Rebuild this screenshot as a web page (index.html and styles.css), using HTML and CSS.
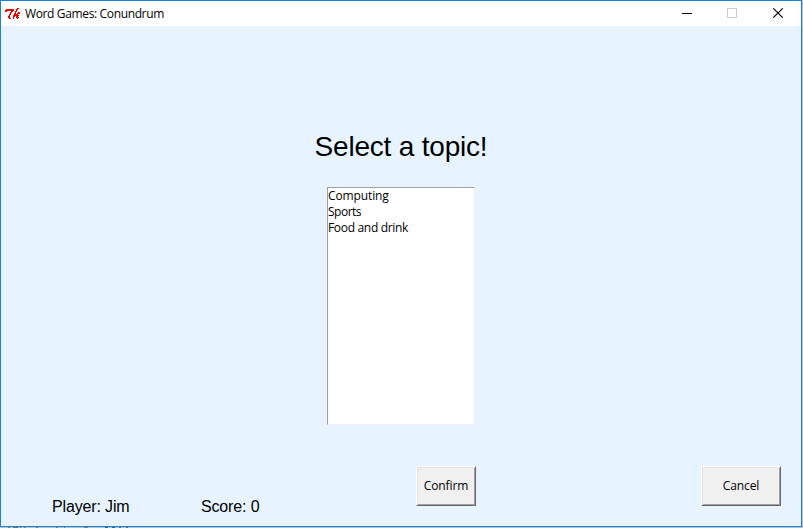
FILE: index.html
```html
<!DOCTYPE html>
<html lang="en">
<head>
<meta charset="utf-8">
<title>Word Games: Conundrum</title>
<link rel="stylesheet" href="styles.css">
</head>
<body>
<div class="window">
  <header class="titlebar">
    <svg class="logo" width="16" height="14" viewBox="0 0 16 14" fill="none" stroke="#f00000" shape-rendering="crispEdges"><path d="M1 2.5H9M0 3.5H9M0 4.5H2M6 4.5H8M5 5.5H7M5 6.5H6M4 7.5H6M4 8.5H5M3 9.5H5M3 10.5H5M4 11.5H6M12 1.5H14M11 2.5H13M11 3.5H12M10 4.5H12M10 5.5H11M13 5.5H15M9 6.5H11M12 6.5H15M9 7.5H13M8 8.5H14M8 9.5H10M11 9.5H13M8 10.5H9M11 10.5H14M8 11.5H9M12 11.5H13"/></svg>
    <span class="caption">Word Games: Conundrum</span>
    <div class="controls">
      <svg width="45" height="25" viewBox="0 0 45 25" shape-rendering="crispEdges"><path d="M17 12.5H27" stroke="#000"/></svg>
      <svg width="46" height="25" viewBox="0 0 46 25" shape-rendering="crispEdges"><rect x="17.5" y="7.5" width="9" height="9" fill="none" stroke="#ccc"/></svg>
      <svg width="45" height="25" viewBox="0 0 45 25"><path d="M17.3 7.3L26.7 16.7M26.7 7.3L17.3 16.7" stroke="#000" stroke-width="1.2"/></svg>
    </div>
  </header>
  <main class="content">
    <h1>Select a topic!</h1>
    <ul class="listbox">
      <li class="computing">Computing</li>
      <li class="sports">Sports</li>
      <li class="food">Food and drink</li>
    </ul>
    <footer class="footer">
      <span class="player">Player: Jim</span>
      <span class="score">Score: 0</span>
      <button class="confirm">Confirm</button>
      <button class="cancel">Cancel</button>
    </footer>
  </main>
</div>
<div class="backdrop"></div>
</body>
</html>
```
FILE: styles.css
```css
* { box-sizing: border-box; }
body {
  margin: 0;
  width: 803px;
  height: 528px;
  overflow: hidden;
  background: #b9c0c6;
  color: #000;
  font: 12px "Open Sans", sans-serif;
}
.window {
  width: 802px;
  height: 527px;
  border: 1px solid #1883d7;
  background: #e7f4ff;
  display: flex;
  flex-direction: column;
}
/* Sliver of the page behind the window */
.backdrop {
  height: 1px;
  background: linear-gradient(90deg,
    transparent 8px, #8c8060 8px 10px, transparent 10px 13px,
    #6f7660 13px 18px, transparent 18px 20px, #8c8060 20px 21px, transparent 21px 24px,
    #a08a60 24px 26px, transparent 26px 36px, #8c8060 36px 38px, transparent 38px 56px,
    #8c8060 56px 58px, transparent 58px 64px, #8c8060 64px 65px, transparent 65px 84px,
    #8c8060 84px 88px, transparent 88px 105px, #2d6680 105px 108px, transparent 108px 112px,
    #2d6680 112px 115px, transparent 115px 119px, #80666a 119px 121px, transparent 121px 126px,
    #80666a 126px 128px, transparent 128px);
}
.titlebar {
  height: 25px;
  flex: none;
  display: flex;
  align-items: center;
  background: #fff;
  padding-left: 4px;
}
.logo { margin-right: 4px; }
.caption { letter-spacing: -0.36px; white-space: nowrap; }
.controls { display: flex; margin-left: auto; }
.content {
  flex: 1;
  display: flex;
  flex-direction: column;
  align-items: center;
}
h1 {
  margin: 104px 0 24px;
  font: 28px/33px "Liberation Sans", sans-serif;
  letter-spacing: -0.2px;
}
.listbox {
  width: 148px;
  height: 238px;
  margin: 0;
  padding: 0;
  list-style: none;
  background: #fff;
  border: 1px solid;
  border-color: #a0a0a0 #f0f0f0 #f0f0f0 #a0a0a0;
  line-height: 16px;
}
.computing { letter-spacing: -0.12px; }
.sports { letter-spacing: -0.5px; }
.food { letter-spacing: -0.32px; }
.footer {
  width: 100%;
  display: flex;
  margin-top: 41px;
  padding-left: 51px;
}
.player, .score {
  font: 16px/18px "Liberation Sans", sans-serif;
  padding-top: 32px;
  white-space: nowrap;
  letter-spacing: -0.15px;
}
.player { width: 149px; }
.score { width: 215px; }
button {
  height: 40px;
  padding: 0 0 1px;
  font: inherit;
  color: #000;
  background: #f0f0f0;
  border: 1px solid;
  border-color: #fff #696969 #696969 #fff;
  box-shadow: inset 1px 1px #e3e3e3, inset -1px -1px #a0a0a0;
}
.confirm { width: 60px; letter-spacing: -0.1px; }
.cancel { width: 80px; margin-left: 225px; letter-spacing: -0.1px; }
```
